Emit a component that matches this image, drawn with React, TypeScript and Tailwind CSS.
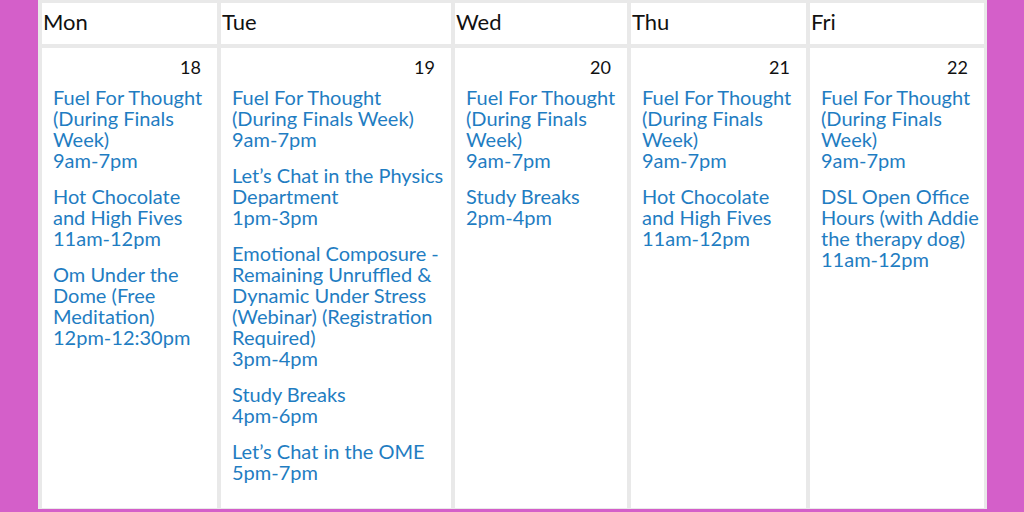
const days = [
  {
    name: 'Mon',
    date: 18,
    events: [
      { title: 'Fuel For Thought (During Finals Week)', time: '9am-7pm' },
      { title: 'Hot Chocolate and High Fives', time: '11am-12pm' },
      { title: 'Om Under the Dome (Free Meditation)', time: '12pm-12:30pm' },
    ],
  },
  {
    name: 'Tue',
    date: 19,
    events: [
      { title: 'Fuel For Thought (During Finals Week)', time: '9am-7pm' },
      { title: 'Let’s Chat in the Physics Department', time: '1pm-3pm' },
      {
        title: 'Emotional Composure - Remaining Unruffled & Dynamic Under Stress (Webinar) (Registration Required)',
        time: '3pm-4pm',
      },
      { title: 'Study Breaks', time: '4pm-6pm' },
      { title: 'Let’s Chat in the OME', time: '5pm-7pm' },
    ],
  },
  {
    name: 'Wed',
    date: 20,
    events: [
      { title: 'Fuel For Thought (During Finals Week)', time: '9am-7pm' },
      { title: 'Study Breaks', time: '2pm-4pm' },
    ],
  },
  {
    name: 'Thu',
    date: 21,
    events: [
      { title: 'Fuel For Thought (During Finals Week)', time: '9am-7pm' },
      { title: 'Hot Chocolate and High Fives', time: '11am-12pm' },
    ],
  },
  {
    name: 'Fri',
    date: 22,
    events: [
      { title: 'Fuel For Thought (During Finals Week)', time: '9am-7pm' },
      { title: 'DSL Open Office Hours (with Addie the therapy dog)', time: '11am-12pm' },
    ],
  },
];

const App = () => {
  return (
    <div className="w-[1024px] h-[512px] bg-[#d45fc9] overflow-hidden font-['Lato',sans-serif]">
      <div className="ml-[38px] w-[949px] h-[509px] bg-[#e9e9e9] pt-[3px] pl-[4px] pr-[3px] pb-[1px] grid grid-cols-[175px_230px_172px_175px_174px] grid-rows-[41px_1fr] gap-[4px]">
        {days.map((day) => (
          <div key={day.name} className="bg-white flex items-center pl-[1px] pb-[4px] text-[22px] text-[#111]">
            {day.name}
          </div>
        ))}
        {days.map((day) => (
          <div key={day.date} className="bg-white pl-[11px] pr-[2px] pt-[9px]">
            <div className="text-right pr-[14px] text-[18px] leading-[20px] text-[#111] mb-[10px]">
              {day.date}
            </div>
            {day.events.map((ev, i) => (
              <div key={i} className="mb-[15px] text-[20px] leading-[21px] text-[#1f7dc2]">
                <div>{ev.title}</div>
                <div>{ev.time}</div>
              </div>
            ))}
          </div>
        ))}
      </div>
    </div>
  );
};

export default App;
